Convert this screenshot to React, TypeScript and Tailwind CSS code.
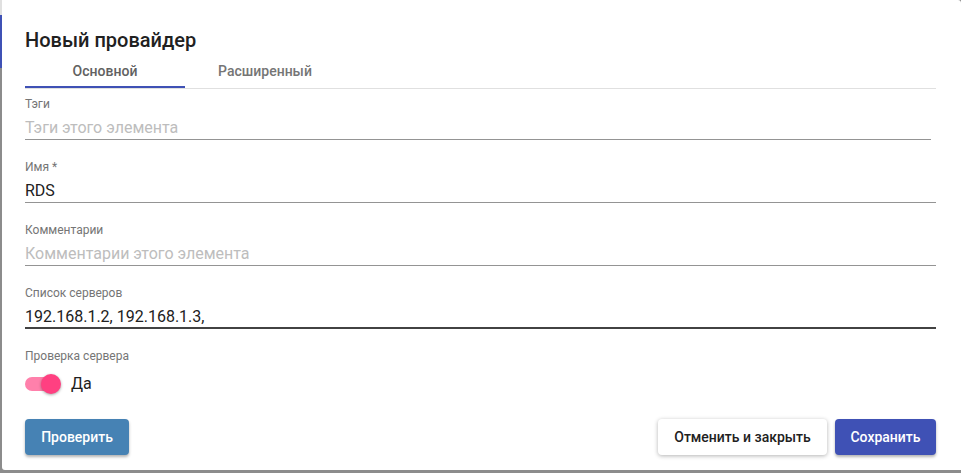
import React, { useState } from 'react';

interface FieldProps {
  label: string;
  value?: string;
  placeholder?: string;
  focused?: boolean;
  short?: boolean;
}

function Field({ label, value, placeholder, focused, short }: FieldProps) {
  return (
    <div className={short ? 'mr-[5px]' : ''}>
      <div className="text-xs leading-4 text-[#757575]">{label}</div>
      <div
        className={`mt-[5px] h-[23px] text-base leading-[22px] ${
          focused ? 'border-b-2 border-[#424242]' : 'border-b border-[#949494]'
        }`}
      >
        {value ? (
          <span className="text-[#212121]">{value}</span>
        ) : (
          <span className="text-[#bdbdbd]">{placeholder}</span>
        )}
      </div>
    </div>
  );
}

export default function App() {
  const [tab, setTab] = useState(0);
  const [check, setCheck] = useState(true);
  const tabs = ['Основной', 'Расширенный'];

  return (
    <div
      className="flex h-[473px] w-[961px] bg-[#8c8c8c]"
      style={{ fontFamily: 'Roboto, "Noto Sans", sans-serif' }}
    >
      {/* what peeks out from behind the dialog */}
      <div className="flex w-[2px] flex-col">
        <div className="h-[15px] bg-[#e0e0e0]" />
        <div className="h-[53px] bg-[#3f51b5]" />
        <div className="flex-1 bg-[#8c8c8c]" />
      </div>

      <div className="flex h-[470px] w-[959px] flex-col rounded-bl-[3px] rounded-tr-[3px] bg-white pl-[23px] pr-[25px] pt-6">
        <h2 className="text-xl font-medium leading-8 text-[#212121]">Новый провайдер</h2>

        <div className="flex border-b border-[#e0e0e0]">
          {tabs.map((t, i) => (
            <button
              key={t}
              onClick={() => setTab(i)}
              className={`h-[32px] w-[160px] text-sm font-medium ${
                tab === i ? 'border-b-2 border-[#3f51b5] text-[#616161]' : 'border-b-2 border-transparent text-[#757575]'
              }`}
            >
              {t}
            </button>
          ))}
        </div>

        <div className="mt-[7px] flex flex-col gap-[19px]">
          <Field label="Тэги" placeholder="Тэги этого элемента" short />
          <Field label="Имя *" value="RDS" />
          <Field label="Комментарии" placeholder="Комментарии этого элемента" />
          <Field label="Список серверов" value="192.168.1.2, 192.168.1.3," focused />

          <div>
            <div className="text-xs leading-4 text-[#757575]">Проверка сервера</div>
            <div className="mt-2 flex h-6 items-center">
              <button
                onClick={() => setCheck(!check)}
                className="relative flex h-6 w-[38px] items-center"
              >
                <span
                  className={`h-[14px] w-[34px] rounded-full ${check ? 'bg-[#ff80ab]' : 'bg-[#bdbdbd]'}`}
                />
                <span
                  className={`absolute top-[2px] h-5 w-5 rounded-full shadow-[0_1px_3px_rgba(0,0,0,0.35)] ${
                    check ? 'left-[16px] bg-[#ff4081]' : 'left-0 bg-[#fafafa]'
                  }`}
                />
              </button>
              <span className="ml-[8px] text-base text-[#212121]">{check ? 'Да' : 'Нет'}</span>
            </div>
          </div>
        </div>

        <div className="mt-[23px] flex items-center">
          <button className="h-9 w-[104px] rounded bg-[#4682b4] text-sm font-medium text-white shadow-[0_2px_3px_rgba(0,0,0,0.3)]">
            Проверить
          </button>
          <div className="flex-1" />
          <button className="h-9 w-[169px] rounded bg-white text-sm font-medium text-[#212121] shadow-[0_1px_4px_rgba(0,0,0,0.3)]">
            Отменить и закрыть
          </button>
          <button className="ml-2 h-9 w-[101px] rounded bg-[#3f51b5] text-sm font-medium text-white shadow-[0_2px_3px_rgba(0,0,0,0.3)]">
            Сохранить
          </button>
        </div>
      </div>
    </div>
  );
}
